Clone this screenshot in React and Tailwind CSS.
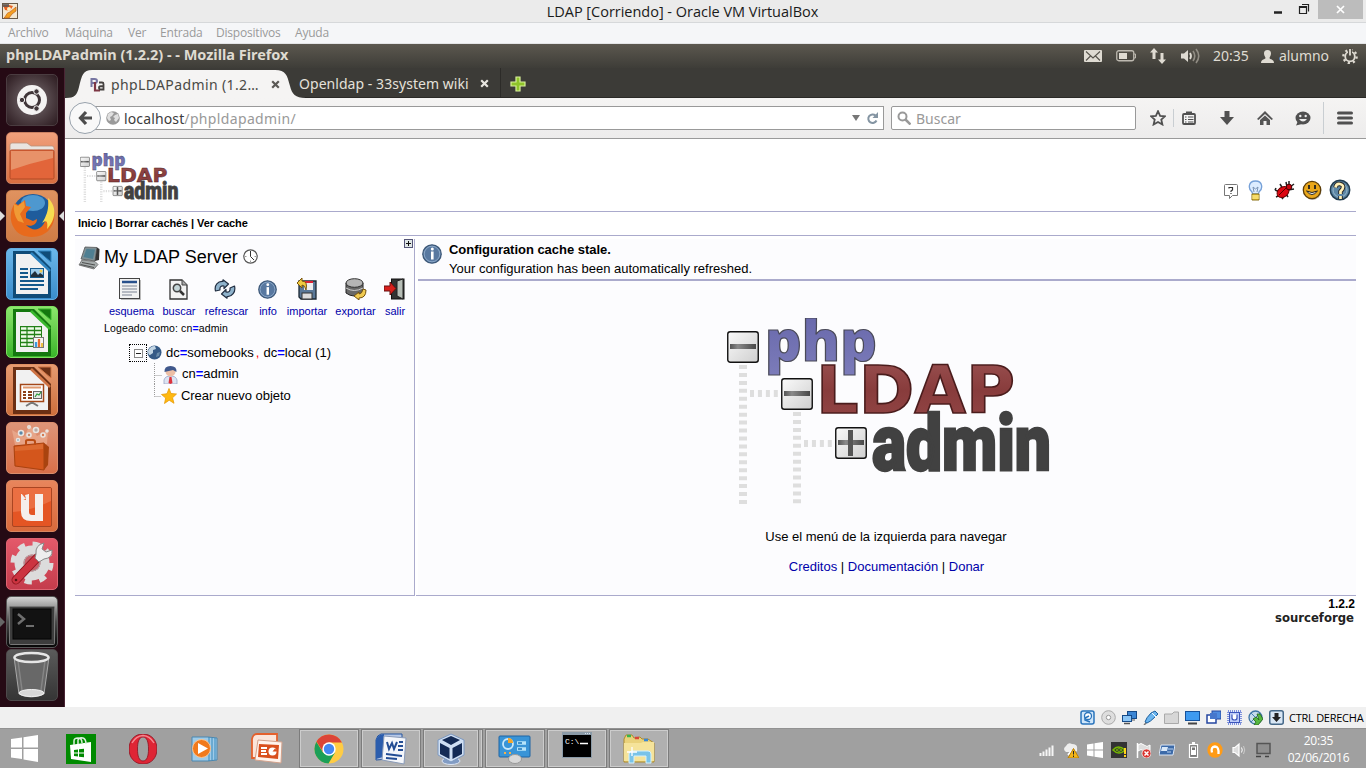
import React from "react";

const UBUNTU = "font-['Noto_Sans','Open_Sans',sans-serif]";
const SEGOE = "font-['Open_Sans','Noto_Sans',sans-serif]";
const ARIAL = "font-['Liberation_Sans',Arial,sans-serif]";

function Svg({ w = 16, h = 16, vb, className = "", children }) {
  return (
    <svg width={w} height={h} viewBox={vb || `0 0 ${w} ${h}`} className={"block shrink-0 " + className} fill="none">
      {children}
    </svg>
  );
}

/* ---------- brand logo ---------- */

function TreeBox({ x, y, plus }) {
  return (
    <g>
      <rect x={x + 0.75} y={y + 0.75} width="30.5" height="30.5" rx="2.5" fill="url(#boxg)" stroke="#111" strokeWidth="1.4" />
      <rect x={x + 3} y={y + 13} width="26" height="5" fill="url(#barg)" />
      {plus && <rect x={x + 13} y={y + 3} width="5" height="26" fill="#555" />}
    </g>
  );
}

function Logo({ w, h, vb, className }) {
  return (
    <Svg w={w} h={h} vb={vb} className={className}>
      <defs>
        <linearGradient id="boxg" x1="0" y1="0" x2="1" y2="1">
          <stop offset="0" stopColor="#fafafa" />
          <stop offset="1" stopColor="#cfcfcf" />
        </linearGradient>
        <linearGradient id="barg">
          <stop offset="0" stopColor="#555" />
          <stop offset=".3" stopColor="#8a8a8a" />
          <stop offset="1" stopColor="#484848" />
        </linearGradient>
        <linearGradient id="phpg" x1="0" y1="0" x2="0" y2="1">
          <stop offset="0" stopColor="#6464a8" />
          <stop offset="1" stopColor="#7c7cba" />
        </linearGradient>
        <linearGradient id="ldapg" x1="0" y1="0" x2="0" y2="1">
          <stop offset="0" stopColor="#9c5353" />
          <stop offset=".5" stopColor="#883c3c" />
          <stop offset="1" stopColor="#934646" />
        </linearGradient>
      </defs>
      <g stroke="#dedede" strokeDasharray="4 3.94">
        <path d="M16 47V188" strokeWidth="8" />
        <path d="M70 94V188" strokeWidth="8" />
        <path d="M23 75.500H53" strokeWidth="7" />
        <path d="M77 125.500H107" strokeWidth="7" />
      </g>
      <TreeBox x={0} y={13} />
      <TreeBox x={54} y={60} />
      <TreeBox x={108} y={109} plus />
      <text x="38" y="43" fontFamily="Open Sans" fontWeight="800" fontSize="56" textLength="112" lengthAdjust="spacingAndGlyphs" fill="url(#phpg)" stroke="#4a4a58" strokeWidth="1.2">php</text>
      <text x="89" y="95" fontFamily="DejaVu Sans" fontWeight="bold" fontSize="65" textLength="199" lengthAdjust="spacingAndGlyphs" fill="url(#ldapg)" stroke="#4a1c1c" strokeWidth="1.6">LDAP</text>
      <text x="145" y="152" fontFamily="Roboto" fontWeight="900" fontSize="78" textLength="179" lengthAdjust="spacingAndGlyphs" fill="#414141" stroke="#414141" strokeWidth="2.500">admin</text>
    </Svg>
  );
}

/* ---------- host window ---------- */

function TitleBar() {
  return (
    <div className={"flex h-[23px] shrink-0 border-b border-[#d6d8da] bg-[#ebebeb] " + SEGOE}>
      <div className="w-[90px] pl-0.5 pt-[3px]">
        <Svg>
          <rect x=".5" y=".5" width="15" height="15" fill="#f3e7d0" stroke="#6a5a48" />
          <path d="M2 15C5 12 4 10 8 9L14 4V8L10 11 7 15Z" fill="#f4a020" stroke="#c0601a" strokeWidth=".7" />
          <path d="M1 2H7L11 3 8 8 3 7Z" fill="#e86020" />
          <path d="M1 1H7V4H1Z" fill="#555" opacity=".8" />
          <circle cx="7" cy="6" r="2" fill="#fff0c0" />
        </Svg>
      </div>
      <div className="flex-1 pl-[9px] text-center text-[14.500px] leading-[23px] tracking-[-0.020px] text-[#1a1a1a]">LDAP [Corriendo] - Oracle VM VirtualBox</div>
      <div className="flex w-[100px] items-start">
        <Svg w={52} h={19}>
          <path d="M8 12.500H16" stroke="#222" strokeWidth="2.5" />
          <path d="M33.500 6.500H40.500V13.500H33.500ZM36 4.500H42.500V11.500" stroke="#222" strokeWidth="1.200" />
          <path d="M33 7H41" stroke="#222" strokeWidth="2" />
        </Svg>
        <div className="flex h-[19px] w-[45px] items-center justify-center bg-[#bcbcbc]">
          <Svg w={9} h={9}><path d="M1 1L8 8M8 1L1 8" stroke="#fff" strokeWidth="1.700" /></Svg>
        </div>
      </div>
    </div>
  );
}

function MenuBar() {
  return (
    <div className={"flex h-[21px] shrink-0 border-b border-[#e3e4e6] bg-[#f5f6f8] pl-2 text-[12px] leading-[20px] tracking-[-0.200px] text-[#9a9a9a] " + SEGOE}>
      <span className="w-[57px]">Archivo</span>
      <span className="w-[63px]">Máquina</span>
      <span className="w-8">Ver</span>
      <span className="w-14">Entrada</span>
      <span className="w-[79px]">Dispositivos</span>
      <span>Ayuda</span>
    </div>
  );
}

/* ---------- guest desktop ---------- */

function UnityPanel() {
  return (
    <div className={"flex h-6 shrink-0 items-center bg-linear-to-b from-[#5c584f] to-[#3e3d38] text-[#dfdbd2] " + UBUNTU}>
      <span className="-mt-[2px] pl-1.5 text-[14.500px] font-bold tracking-[-0.020px]">phpLDAPadmin (1.2.2) - - Mozilla Firefox</span>
      <div className="ml-auto flex items-center text-[14px]">
        <Svg w={18} h={12} className="mr-[14px]">
          <rect width="18" height="12" rx="1" fill="#dfdbd2" />
          <path d="M2 1.500L9 8 16 1.500M2 10.500L6.500 6M16 10.500L11.500 6" stroke="#55524a" strokeWidth="1.100" />
        </Svg>
        <Svg w={20} h={12} className="mr-[13px]">
          <rect x=".75" y=".75" width="17" height="10" rx="2" stroke="#bdb9b0" strokeWidth="1.300" />
          <path d="M18 4H19.500V8H18" stroke="#bdb9b0" />
          <rect x="3" y="3" width="8" height="6" fill="#dfdbd2" />
        </Svg>
        <Svg w={18} h={18} className="mr-[13px]">
          <path d="M5 1L9 5.500H6.500V12H3.500V5.500H1ZM13 17L9 12.500H11.500V6H14.500V12.500H17Z" fill="#dfdbd2" />
        </Svg>
        <Svg w={22} h={16} className="mr-[11px]">
          <path d="M1 5.500H4L8 2V14L4 10.500H1Z" fill="#dfdbd2" />
          <path d="M10 5Q12 8 10 11" stroke="#dfdbd2" strokeWidth="1.800" />
          <path d="M13 3Q16.500 8 13 13M16 1Q21.500 8 16 15" stroke="#918d84" strokeWidth="1.600" />
        </Svg>
        <span className="-mt-[2px] w-[48px]">20:35</span>
        <Svg w={13} h={13} className="mr-[5px]">
          <path d="M6.500 0C9 0 10 1.500 10 3.500 10 6 8.500 7 8.500 8 8.500 9.500 13 9 13 13H0C0 9 4.500 9.500 4.500 8 4.500 7 3 6 3 3.500 3 1.500 4 0 6.500 0Z" fill="#dfdbd2" />
        </Svg>
        <span className="-mt-[2px] w-[63px] tracking-[-0.050px]">alumno</span>
        <Svg w={16} h={16} className="mr-2">
          <circle cx="8" cy="8.500" r="6.600" stroke="#dfdbd2" strokeWidth="2.400" strokeDasharray="2.180 3" />
          <circle cx="8" cy="8.500" r="4.800" stroke="#dfdbd2" strokeWidth="1.800" />
          <rect x="6" y="0" width="4" height="6.500" fill="#504d45" />
          <path d="M8 1V7.500" stroke="#dfdbd2" strokeWidth="1.800" />
        </Svg>
      </div>
    </div>
  );
}

function DocIcon({ c1, c2, children }) {
  return (
    <Svg w={52} h={52}>
      <path d="M7 3H28L45 20V50H7Z" fill={c2} />
      <path d="M10 6H25L42 22V46H10Z" fill="#f1f1f1" />
      <path d="M25 5L44 23" stroke={c1} strokeWidth="2.500" />
      <path d="M32 3H45V14Z" fill={c2} stroke={c1} />
      {children}
    </Svg>
  );
}

const tiles = [
  {
    bg: "bg-radial from-[#7d7477] to-[#2c1b20] border-[#4a3c40]",
    icon: (
      <Svg w={52} h={52}>
        <circle cx="26" cy="26" r="15" fill="#f4f2f2" />
        <circle cx="26" cy="26" r="7.500" stroke="#403539" strokeWidth="3" />
        <g fill="#403539" stroke="#f4f2f2"><circle cx="16" cy="26" r="2.700" /><circle cx="30.500" cy="17.500" r="2.700" /><circle cx="30.500" cy="34.500" r="2.700" /></g>
      </Svg>
    ),
  },
  {
    bg: "bg-linear-to-b from-[#f0a07c] to-[#d96e40] border-[#c98062]",
    icon: (
      <Svg w={52} h={52}>
        <path d="M4 22V13Q4 11 6 11H21L25 14H46Q48 14 48 16V22Z" fill="#e9e4e0" stroke="#b98f7a" strokeWidth=".8" />
        <rect x="4" y="18" width="44" height="29" rx="1.500" fill="#e2653a" stroke="#b04a25" />
        <path d="M5 19H47V26Q25 31 5 38Z" fill="#eaa27a" opacity=".75" />
      </Svg>
    ),
  },
  {
    bg: "bg-linear-to-b from-[#e0925f] to-[#cf7c45] border-[#c98050]",
    icon: (
      <Svg w={52} h={52}>
        <circle cx="27" cy="25" r="21" fill="#1e5c9c" />
        <ellipse cx="27" cy="13" rx="12" ry="8" fill="#5aa8dc" opacity=".8" />
        <path d="M42 10C52 19 49 34 43 40 34 50 14 49 8 38 3 30 4 20 9 13L12 15 19 10 20 16 25 17 20 23 20 28 27 31 31 29C31 35 25 37 20 35 29 44 38 38 40 28 43 22 43 16 42 10Z" fill="#e86a1c" />
        <path d="M42 8C52 17 49 31 41 39 42 32 41 29 36 33 42 24 43 16 42 8Z" fill="#f8dc50" />
        <path d="M8 14L12 16 18 11 19 17 14 24 18 33 12 31Q7 24 8 14Z" fill="#f09a35" />
      </Svg>
    ),
  },
  {
    bg: "bg-linear-to-b from-[#6bb7ea] to-[#3a8dcc] border-[#63ace0]",
    icon: (
      <DocIcon c1="#2e84c0" c2="#104c78">
        <path d="M14 21H22M14 25H22M14 29H22M14 33H38M14 37H38M14 41H32" stroke="#14598c" strokeWidth="2" />
        <rect x="24.500" y="20.500" width="13" height="9" fill="#9dcbea" stroke="#14598c" />
        <path d="M25 29V27L29 23 32 27 34 25 37 27V29Z" fill="#222f3a" />
        <circle cx="35" cy="23" r="1.500" fill="#f6cc4c" />
      </DocIcon>
    ),
  },
  {
    bg: "bg-linear-to-b from-[#8ce66c] to-[#38b428] border-[#7de060]",
    icon: (
      <DocIcon c1="#3ab82e" c2="#14780f">
        <rect x="14" y="20" width="22" height="21" fill="#238018" />
        <path d="M15 22.500H35M15 26.500H35M15 30.500H35M15 34.500H35M15 38.500H35" stroke="#effbe9" strokeWidth="2.500" />
        <path d="M21 20V41M28.500 20V41" stroke="#238018" strokeWidth="1.200" />
        <rect x="27.500" y="31.500" width="10" height="10" fill="#f5f5f5" stroke="#777" />
        <path d="M30 41V36" stroke="#3c9ade" strokeWidth="2.300" /><path d="M33 41V33" stroke="#e86a2c" strokeWidth="2.300" /><path d="M36 41V37" stroke="#edc043" strokeWidth="2" />
      </DocIcon>
    ),
  },
  {
    bg: "bg-linear-to-b from-[#e79a70] to-[#cd6f3c] border-[#df9164]",
    icon: (
      <DocIcon c1="#cf7445" c2="#6b2f14">
        <rect x="14.500" y="20.500" width="23" height="17" fill="#fff" stroke="#a34718" strokeWidth="1.500" />
        <path d="M17 23.500H35" stroke="#e0996f" strokeWidth="2" />
        <path d="M17 28H20M17 31H20M17 34H20M22 28H26M22 31H26M22 34H26" stroke="#8b3f18" strokeWidth="2" />
        <rect x="27.500" y="27.500" width="8" height="7" fill="#e8e8e8" stroke="#666" />
        <path d="M29 33L31 30 33 31 35 28" stroke="#2b9c3c" strokeWidth="1.200" />
        <path d="M20 42L25 39H27L32 42" stroke="#777" strokeWidth="2" />
      </DocIcon>
    ),
  },
  {
    bg: "bg-linear-to-b from-[#dd9478] to-[#d96f49] border-[#da8d6c]",
    icon: (
      <Svg w={52} h={52}>
        <path d="M9 23L6 8 18 15 24 3 31 14 42 8 41 22Z" fill="#f4c4a8" opacity=".45" />
        <g stroke="#e9e4e0" strokeWidth="1.600"><circle cx="15" cy="11" r="2.500" fill="#5c88a8" /><circle cx="30" cy="8" r="2.500" fill="#b8aba6" /><circle cx="37" cy="13" r="2" fill="#d67b52" /><circle cx="23" cy="13" r="2" fill="#c98d74" /><circle cx="12" cy="18" r="1.500" fill="#5c88a8" /><circle cx="23" cy="5" r="1.200" /><circle cx="41" cy="9" r="1" /></g>
        <path d="M8 24L38 21V48L9 44Z" fill="#d4561c" stroke="#a9420f" /><path d="M38 21L43 25 42 43 38 48Z" fill="#a9430f" />
        <path d="M9 25L37 22 37 27 9 29Z" fill="#dc6a30" />
        <path d="M20 23V19Q20 18 22 18H27Q29 18 29 20V23" stroke="#bb4d14" strokeWidth="2" />
      </Svg>
    ),
  },
  {
    bg: "bg-linear-to-b from-[#e8855c] to-[#d96a3c] border-[#d88660]",
    icon: (
      <Svg w={52} h={52}>
        <rect x="6.500" y="7.500" width="39" height="39" rx="1.500" fill="#e45524" stroke="#a94522" />
        <path d="M7 8H45V21Q24 31 7 32Z" fill="#f08056" opacity=".6" />
        <path d="M15 14H23V32Q23 35 26 35H29V14H37V41H25Q15 41 15 32V20H20V19Q17 19 17 22L15 21Z" fill="#f5efec" />
        <path d="M15 13L20 19 23 13Z" fill="#ea693b" /><path d="M19 15L23 14V20L20 19Z" fill="#f5efec" />
      </Svg>
    ),
  },
  {
    bg: "bg-linear-to-b from-[#e4596a] to-[#c43c4c] border-[#dd6472]",
    icon: (
      <Svg w={52} h={52}>
        <circle cx="26" cy="25" r="18.500" stroke="#dcdcdc" strokeWidth="6" strokeDasharray="7 7.530" />
        <circle cx="26" cy="25" r="13" stroke="#dcdcdc" strokeWidth="9" />
        <circle cx="26" cy="25" r="8" fill="#c9606a" stroke="#aaa" />
        <path d="M10 42L31 20" stroke="#8f1820" strokeWidth="9" strokeLinecap="round" />
        <path d="M10 42L31 20" stroke="#cc3440" strokeWidth="7" strokeLinecap="round" />
        <path d="M30 16Q29 7 38 5L36 11 40 14 46 12Q47 20 38 21L33 24 29 20Z" fill="#eeeeee" stroke="#888" />
        <circle cx="10" cy="42" r="1.300" fill="#5b1014" />
      </Svg>
    ),
  },
  {
    bg: "bg-linear-to-b from-[#d4d4d4] via-[#4b4b4b] to-[#070707] border-[#555]",
    icon: (
      <Svg w={52} h={52}>
        <rect x="3.500" y="10.500" width="45" height="38" rx="1" fill="#3d3d3d" stroke="#777" />
        <rect x="7" y="13" width="38" height="30" fill="#121212" stroke="#050505" />
        <path d="M12 18L18 23 12 28" stroke="#6f6f6f" strokeWidth="2.500" />
        <path d="M20 30H28" stroke="#6f6f6f" strokeWidth="2" />
      </Svg>
    ),
  },
  {
    bg: "bg-linear-to-b from-[#5b5b5b] to-[#353535] border-[#4d4a4b] -mt-[5px]",
    icon: (
      <Svg w={52} h={52}>
        <path d="M8 8L13 45Q25 51 38 45L43 8Z" fill="#686868" stroke="#a8a8a8" />
        <path d="M12 12L16 41M39 12L35 41" stroke="#858585" strokeWidth="1.500" />
        <ellipse cx="25.500" cy="8.500" rx="17" ry="4.500" fill="#555" stroke="#e6e6e6" strokeWidth="2.500" />
        <ellipse cx="25.500" cy="44" rx="12.500" ry="3.500" fill="#d8d8d8" stroke="#f2f2f2" />
      </Svg>
    ),
  },
];

function Launcher() {
  return (
    <div className="relative flex w-[65px] shrink-0 flex-col gap-1.5 border-r border-[#4a2535] bg-[#250a14] pl-1.5 pt-1.5">
      {tiles.map((t, i) => (
        <div key={i} className={"flex size-[52px] shrink-0 items-center justify-center overflow-hidden rounded-[5px] border " + t.bg}>
          {t.icon}
        </div>
      ))}
      <Svg w={5} h={10} className="absolute left-0 top-[143px]"><path d="M0 0L5 5 0 10Z" fill="#ddd" /></Svg>
      <Svg w={5} h={10} className="absolute left-[59px] top-[143px]"><path d="M5 0L0 5 5 10Z" fill="#ddd" /></Svg>
      <Svg w={5} h={10} className="absolute left-0 top-[549px]"><path d="M0 0L5 5 0 10Z" fill="#666" /></Svg>
    </div>
  );
}

function Close({ c }) {
  return <Svg w={9} h={9}><path d="M1.200 1.200L7.800 7.800M7.800 1.200L1.200 7.800" stroke={c} strokeWidth="2.200" /></Svg>;
}

function TabStrip() {
  return (
    <div className={"flex h-[30px] shrink-0 border-b border-[#2b2a27] bg-[#3c3b37] text-[14px] " + UBUNTU}>
      <div className="relative h-[30px] w-[234px]">
        <Svg w={242} h={30} className="absolute left-0 top-0">
          <path d="M0 30C10 30 12 27 14 19C17 7 18 2 27 2H210C221 2 222 7 225 18C227 26 230 30 241 30Z" fill="#f5f4f3" />
        </Svg>
        <div className="relative flex h-full items-center pl-[25px] pt-0.5">
          <Svg w={15} h={15}>
            <path d="M1.500 10V2H4.500Q7 2 7 4 7 6 4.500 6H2" stroke="#7776a2" strokeWidth="2" />
            <path d="M5 5V13.500H10" stroke="#7e3744" strokeWidth="2.200" />
            <path d="M9 5.500H12Q13.500 5.500 13.500 7V12.500H10.500Q9 12.500 9 10.500 9 9 13 9" stroke="#45413f" strokeWidth="1.800" />
          </Svg>
          <span className="ml-1.5 w-[160px] tracking-[0.380px] text-[#4a4945]">phpLDAPadmin (1.2…</span>
          <Close c="#5b5955" />
        </div>
      </div>
      <div className="flex w-[202px] items-center border-r border-[#2c2b28] pt-0.5">
        <span className="w-[181px] tracking-[0.050px] text-[#e4e1da]">Openldap - 33system wiki</span>
        <Close c="#e8e6e0" />
      </div>
      <div className="flex items-center pl-[9px] pt-0.5">
        <Svg w={16} h={16}><path d="M6 1H10V6H15V10H10V15H6V10H1V6H6Z" fill="#8fc42a" stroke="#d9f09c" strokeWidth="1.200" /></Svg>
      </div>
    </div>
  );
}

function NavBar() {
  return (
    <div className={"flex h-[41px] shrink-0 items-center border-b border-[#9a9a9a] bg-linear-to-b from-[#f5f4f3] to-[#edecec] pl-1 text-[14px] " + UBUNTU}>
      <div className="z-10 flex size-8 shrink-0 items-center justify-center rounded-full border border-[#98a2ac] bg-[#f8f8f8]">
        <Svg w={16} h={16}><path d="M9 2L3.500 8 9 14M4 8H15" stroke="#4c4c4c" strokeWidth="3.200" /></Svg>
      </div>
      <div className="-ml-1.5 flex h-6 w-[789px] items-center border border-[#999] bg-white pl-[10px]">
        <Svg w={14} h={14}>
          <circle cx="7" cy="7" r="6.800" fill="#9a9a9a" />
          <path d="M2 3L5 1 8 2 6 5 4 6 5 9 3 10 1 7ZM9 4L12 3 13 7 10 11 8 9 9 7 7 6Z" fill="#e0e0e0" />
        </Svg>
        <span className="ml-1 text-[#3c3c3c]"><span className="tracking-[0.130px]">localhost</span><span className="tracking-[0.350px] text-[#999]">/phpldapadmin/</span></span>
        <Svg w={8} h={6} className="ml-auto"><path d="M0 0H8L4 6Z" fill="#777" /></Svg>
        <Svg w={13} h={13} className="ml-1.5 mr-1">
          <path d="M9.500 3.500A4.300 4.300 0 1 0 10.500 8.500" stroke="#8595a3" strokeWidth="2" /><path d="M12 0V6H6.500Z" fill="#8595a3" />
        </Svg>
      </div>
      <div className="ml-[7px] flex h-6 w-[245px] items-center rounded-xs border border-[#999] bg-white pl-[5px]">
        <Svg w={14} h={14}><circle cx="5.500" cy="5.500" r="4" stroke="#999" strokeWidth="2" /><path d="M8.500 8.500L13.500 13.500" stroke="#999" strokeWidth="2.500" /></Svg>
        <span className="ml-[5px] text-[#999]">Buscar</span>
      </div>
      <Svg w={16} h={16} className="ml-3.5"><path d="M8 1.200L10.100 5.800 15 6.300 11.300 9.600 12.400 14.500 8 12 3.600 14.500 4.700 9.600 1 6.300 5.900 5.800Z" stroke="#505050" strokeWidth="1.800" /></Svg>
      <div className="ml-[7px] h-[18px] w-px bg-[#c9ced2]" />
      <Svg w={14} h={14} className="ml-2">
        <rect x="1" y="3" width="12" height="10" rx="1" fill="#f4f4f4" stroke="#505050" strokeWidth="1.800" /><path d="M4 2H10" stroke="#505050" strokeWidth="3" />
        <path d="M3 6H4.500M3 8.500H4.500M3 11H4.500M6 6H11.500M6 8.500H11.500M6 11H11.500" stroke="#505050" strokeWidth="1.100" />
      </Svg>
      <Svg w={14} h={14} className="ml-6"><path d="M4.500 0H9.500V6H14L7 14 0 6H4.500Z" fill="#505050" /></Svg>
      <Svg w={16} h={14} className="ml-[23px]"><path d="M0 8L8 0 16 8 14.500 9 8 3 1.500 9Z" fill="#555" /><path d="M3 9L8 4.500 13 9V14H9.500V10H6.500V14H3Z" fill="#555" /></Svg>
      <Svg w={16} h={15} className="ml-[22px]"><ellipse cx="8" cy="7" rx="7.500" ry="6.500" fill="#505050" /><path d="M3 10L1 14.500 7 13Z" fill="#505050" /><path d="M4 8Q8 13 12 8Z" fill="#eee" /><circle cx="5.300" cy="5" r="1.200" fill="#eee" /><circle cx="10.700" cy="5" r="1.200" fill="#eee" /></Svg>
      <div className="ml-3 h-8 w-px bg-[#c9ced2]" />
      <Svg w={16} h={14} className="ml-[13px]"><path d="M1.500 2H14.500M1.500 7H14.500M1.500 12H14.500" stroke="#505050" strokeWidth="3" strokeLinecap="round" /></Svg>
    </div>
  );
}

/* ---------- web page ---------- */

function InfoIcon({ s }) {
  return (
    <Svg w={s} h={s} vb="0 0 20 20">
      <circle cx="10" cy="10" r="9.200" fill="#5878a0" stroke="#3d5878" strokeWidth="1.300" />
      <circle cx="10" cy="10" r="7.800" stroke="#8ba8c8" strokeWidth="1" />
      <path d="M10.300 7.500V15.500" stroke="#fff" strokeWidth="2.600" /><circle cx="10.300" cy="4.900" r="1.500" fill="#fff" />
    </Svg>
  );
}

const tools = [
  ["esquema", "w-[45px]",
    <Svg w={22} h={22} className="mr-[3px]"><rect x="2" y="2" width="20" height="20" fill="#bbb" /><rect x=".5" y=".5" width="20" height="20" fill="#f2f2f2" stroke="#444" /><path d="M3 4H18" stroke="#28508c" strokeWidth="2.500" /><path d="M3 8H18M3 11H18M3 14H18M3 17H13" stroke="#a2a8b2" strokeWidth="1.500" /></Svg>],
  ["buscar", "w-[34px]",
    <Svg w={20} h={21}><path d="M1 1H13L18 6V20H1Z" fill="#f2f2f2" stroke="#333" strokeWidth="1.300" /><path d="M13 1V6H18" fill="#aaa" stroke="#444" /><circle cx="8" cy="9" r="3.700" fill="#c4d5d8" stroke="#444" strokeWidth="1.500" /><path d="M11 12L15 16" stroke="#333" strokeWidth="2.500" /></Svg>],
  ["refrescar", "w-[45px]",
    <Svg w={22} h={20} className="mr-[3px]">
      <g fill="#8fb3cc" stroke="#222f42" strokeWidth="1.200" strokeLinejoin="round">
        <path d="M1.500 12C0 6 4 2 9 2.500V.8L14.500 5 10 9.500V7C7 6.500 5.500 8 6 11Z" />
        <path d="M20.500 7C22 13 18 18 13 17.500V19.200L7.500 15 12 10.500V13C15 13.500 16.500 12 16 9Z" />
      </g>
    </Svg>],
  ["info", "w-[22px]", <div className="pr-[2px]"><InfoIcon s={19} /></div>],
  ["importar", "w-10",
    <Svg w={22} h={22}><path d="M3 3H20V21H5L3 19Z" fill="#5a7898" stroke="#1c2833" strokeWidth="1.300" /><rect x="8" y="3" width="9" height="9" fill="#eee" /><path d="M8 4H17" stroke="#d23" strokeWidth="2" /><rect x="6" y="15" width="10" height="6" fill="#ddd" stroke="#333" /><path d="M1 5L6 0V3Q12 3 10 12 9 7 6 7V10Z" fill="#f0ca40" stroke="#79550c" /></Svg>],
  ["exportar", "w-[41px]",
    <Svg w={22} h={22}><path d="M1 5V15Q9 21 18 15V5Z" fill="#686868" stroke="#222" /><ellipse cx="9.500" cy="5" rx="8.500" ry="4.300" fill="#b5b5b5" stroke="#333" /><path d="M1 10Q9 15 18 10" stroke="#ccc" /><path d="M21 12Q21 20 14 20V22L9 18 14 14V16Q17 16 18 11Z" fill="#f0ca50" stroke="#745310" /></Svg>],
  ["salir", "w-[22px]",
    <Svg w={22} h={22}><rect x="7.500" y="1" width="12.500" height="20" fill="#333" stroke="#111" /><path d="M13 3L19 1V21L13 18Z" fill="#b7beb7" stroke="#222" /><path d="M0 8H6V4L12 10.500 6 17V13H0Z" fill="#d8201c" stroke="#641010" /></Svg>],
];

function ServerPanel() {
  return (
    <div className="flex h-[356px] w-[340px] shrink-0 flex-col border-r border-[#aaaacc] bg-[#fcfcfe]">
      <div className="flex h-9 pl-[3px]">
        <Svg w={23} h={24} className="mt-[7px]">
          <path d="M7 1L19 1.500 17 15 3 13Z" fill="#7f9096" stroke="#555" strokeWidth=".8" /><path d="M8.500 3L17 3.500 15 13 5.500 11Z" fill="#4f7f92" />
          <path d="M19 1.500L21.500 3 21 14 17 15Z" fill="#333" /><path d="M4 14L17 15.500 20 18.500 16 23 1 19Z" fill="#a5abab" stroke="#666" strokeWidth=".8" /><path d="M4 16.500L17 19M2.500 18.500L16 21.500" stroke="#444" strokeWidth=".9" />
        </Svg>
        <span className="ml-[3px] mt-[6px] text-[18px] leading-6">My LDAP Server</span>
        <Svg w={15} h={15} className="ml-[5px] mt-[10px]"><circle cx="7.500" cy="7.500" r="6.700" fill="#fff" stroke="#555" strokeWidth="1.200" /><path d="M7.500 2V7.500L11 11" stroke="#333" /><path d="M2 7.500H3.500M11.500 7.500H13M7.500 11.500V13" stroke="#999" /></Svg>
        <Svg w={9} h={9} className="ml-auto mr-px"><rect x=".5" y=".5" width="8" height="8" fill="#dfe6e6" stroke="#557" /><path d="M2 4.500H7M4.500 2V7" stroke="#111" /></Svg>
      </div>
      <div className="flex gap-2 pl-[34px] text-[11px] text-[#0000aa]">
        {tools.map(([label, w, icon]) => (
          <div key={label} className={"flex flex-col items-center " + w}>
            <div className="flex h-7 items-center">{icon}</div>
            <span className="leading-[17px]">{label}</span>
          </div>
        ))}
      </div>
      <div className="pl-[29px] text-[10.500px] leading-[16px] tracking-[0.130px]">Logeado como: cn<b className="text-[#0000ff]">=</b>admin</div>
      <div className="mt-[5px] flex h-6 pl-[54px] text-[13px]">
        <div className="mt-[3px] flex size-[18px] items-center justify-center border border-dotted border-black">
          <Svg w={9} h={9}><rect x=".5" y=".5" width="8" height="8" fill="#fff" stroke="#888" /><path d="M2 4.500H7" stroke="#222" /></Svg>
        </div>
        <Svg w={15} h={15} className="mt-1">
          <circle cx="7.500" cy="7.500" r="7" fill="#355a86" /><path d="M1 6Q3 1 8 1L9 4 6 5 6 8 3 10Q1 10 1 6Z" fill="#c2d5e4" /><path d="M10 8L13 7 12 11 9 12Z" fill="#6a8cab" />
        </Svg>
        <span className="ml-1 leading-[24px]">dc<b className="text-[#0000ff]">=</b>somebooks<span className="inline-block w-[6px] pl-[2px] text-[#f00]">,</span> dc<b className="text-[#0000ff]">=</b>local (1)</span>
      </div>
      <div className="-mt-[2px] flex h-[21px] pl-[79px] text-[13px]">
        <Svg w={8} h={21}><path d="M.5 0V21M.5 12.500H8" stroke="#999" strokeDasharray="1 1" /></Svg>
        <Svg w={17} h={19} className="mt-[2px]">
          <path d="M2 19V15Q3 11 8.500 11 14 11 15 15V19Z" fill="#dde4f2" stroke="#9aa4c8" strokeWidth=".8" /><path d="M7.500 12H9.500L10.500 18 8.500 19 6.500 18Z" fill="#dc333d" /><circle cx="8.500" cy="6.500" r="5" fill="#edbfa6" /><path d="M2.500 7Q2 1 8.500 1 15 1 14.500 7L11 5Z" fill="#40588c" />
        </Svg>
        <span className="ml-[3px] leading-[22px]">cn<b className="text-[#0000ff]">=</b>admin</span>
      </div>
      <div className="flex h-[22px] pl-[79px] text-[13px]">
        <Svg w={7} h={22}><path d="M.5 0V12.500M.5 12.500H8" stroke="#999" strokeDasharray="1 1" /></Svg>
        <Svg w={16} h={16} className="mt-1"><path d="M8 .5L10 5.500 15.500 6 11.500 9.800 13 15.300 8.200 12.200 3.500 15.500 4.700 10 .5 6.500 6 5.700Z" fill="#ffb910" stroke="#e79a08" strokeWidth=".8" /></Svg>
        <span className="ml-1 leading-[24px] tracking-[-0.050px]">Crear nuevo objeto</span>
      </div>
    </div>
  );
}

function PageHeader() {
  return (
    <div className="flex h-[73px] shrink-0 items-end justify-between border-b border-[#aaaacc] pl-[5px]">
      <Logo w={99} h={49} vb="0 0 326 161" className="mb-[9px]" />
      <div className="mb-[10px] flex items-center gap-[7px] pr-[5px]">
        <Svg w={16} h={18} className="mr-[2px]"><path d="M1.500 4.500Q1.500 3.500 2.500 3.500H13.500Q14.500 3.500 14.500 4.500V14.500H9.500L6.500 17.500V14.500H1.500Z" fill="#fff" stroke="#777" /><path d="M6 7.500V6.500H9.500V9L8 10V11M8 12V13" stroke="#333" strokeWidth="1.200" /></Svg>
        <Svg w={15} h={21} className="mr-[3px]"><path d="M7.500 1C0 1 0 9 4 12L4.500 14H10.500L11 12C15 9 15 1 7.500 1Z" fill="#dcecff" stroke="#75a0d8" strokeWidth="1.300" /><path d="M5 7L6 12M10 7L9 12M5 7L7.500 9 10 7" stroke="#7a93b5" /><path d="M4 14H11V20H4Z" fill="#ecc635" stroke="#8a7114" /><path d="M4 16H11M4 18H11" stroke="#fff2a2" /></Svg>
        <Svg w={22} h={20}><path d="M2 10L7 12M3 17L9 14M9 19L12 15M7 4L10 9M13 2L14 7M16 1L16 5M21 4L17 7M21 9L15 10M13 14L15 17M3 8L2 10" stroke="#222" strokeWidth="1.500" /><ellipse cx="10" cy="12" rx="6.500" ry="5" transform="rotate(-38 10 12)" fill="#dd0712" stroke="#600" /><circle cx="16" cy="7" r="2.800" fill="#c80610" stroke="#400" /><path d="M6 15L14 7" stroke="#500" /></Svg>
        <Svg w={20} h={20}><circle cx="10.500" cy="11" r="9" fill="#bbb" /><circle cx="10" cy="10" r="8.700" fill="#e9a71b" stroke="#5c3d08" strokeWidth="1.300" /><path d="M7 5V9M13 5V9" stroke="#222" strokeWidth="1.800" /><path d="M4.500 11Q10 18 15.500 11Q10 14 4.500 11Z" fill="#fff" stroke="#222" /></Svg>
        <Svg w={22} h={22}><circle cx="11" cy="11" r="9.700" fill="#5c86a5" stroke="#223d50" strokeWidth="1.500" /><circle cx="11" cy="11" r="7" stroke="#97b7c8" /><path d="M6.500 8.500Q7 4.500 11 5 15.500 6 13.500 10L11.500 12.500V15M11.500 17V20" stroke="#222" strokeWidth="4.500" /><path d="M6.500 8.500Q7 4.500 11 5 15.500 6 13.500 10L11.500 12.500V15M11.500 17V20" stroke="#fff1b8" strokeWidth="2.700" /></Svg>
      </div>
    </div>
  );
}

function Page() {
  return (
    <div className={"flex flex-1 flex-col bg-white pl-2.5 pr-2.5 text-black " + ARIAL}>
      <PageHeader />
      <div className="h-6 shrink-0 border-b border-[#aaaacc] pl-[3px] text-[11px] font-bold leading-[23px] tracking-[-0.080px]">Inicio | Borrar cachés | Ver cache</div>
      <div className="flex pt-[3px]">
        <div className="border-b border-[#aaaacc]"><ServerPanel /></div>
        <div className="ml-px flex h-[357px] flex-1 flex-col border-b border-[#aaaacc] pl-0.5">
          <div className="flex h-[42px] shrink-0 border-b-2 border-[#aaaacc] bg-[#fcfcfe] pl-1 pt-[1px]">
            <div className="pt-1"><InfoIcon s={20} /></div>
            <div className="ml-[7px] text-[13px] leading-[19px]">
              <b className="tracking-[-0.030px]">Configuration cache stale.</b>
              <div>Your configuration has been automatically refreshed.</div>
            </div>
          </div>
          <div className="flex flex-1 flex-col items-center bg-[#fcfcfe] pt-[37px] text-[13px]">
            <Logo w={326} h={190} vb="0 0 326 190" className="ml-[6px]" />
            <span className="mr-[2px] mt-[19px] leading-5">Use el menú de la izquierda para navegar</span>
            <span className="mr-[1px] mt-[10px] leading-5"><span className="text-[#0000aa]">Creditos</span> | <span className="text-[#0000aa]">Documentación</span> | <span className="text-[#0000aa]">Donar</span></span>
          </div>
        </div>
      </div>
      <div className="flex flex-col items-end pr-px text-[12px] font-bold leading-[15px]">
        <span className="pt-px">1.2.2</span>
        <Svg w={80} h={15}><text x="0" y="10" fontFamily="DejaVu Sans" fontWeight="bold" fontSize="12.500" textLength="79" lengthAdjust="spacingAndGlyphs" fill="#222">sourceforge</text></Svg>
      </div>
    </div>
  );
}

/* ---------- host bars ---------- */

const vmIcons = [
  <><rect x="1" y="1" width="13" height="13" rx="2" fill="#cfe6fa" stroke="#2a74bc" strokeWidth="1.500" /><circle cx="8" cy="6" r="3.500" fill="#fff" stroke="#2a74bc" strokeWidth="1.300" /><path d="M9 6L5 8V10L10 12" stroke="#2a74bc" strokeWidth="1.500" /></>,
  <><circle cx="7.500" cy="7.500" r="6.800" fill="#dedede" stroke="#aaa" /><circle cx="7.500" cy="7.500" r="2.200" fill="#fff" stroke="#999" /></>,
  <><rect x="5.500" y="1.500" width="9" height="7" fill="#3c86d4" stroke="#164a88" /><path d="M8 10H13" stroke="#555" /><rect x=".5" y="5.500" width="9" height="6" fill="#8cc6f6" stroke="#164a88" /><path d="M2 13.500H8" stroke="#555" strokeWidth="1.500" /></>,
  <><path d="M1 15L4 12" stroke="#777" strokeWidth="1.500" /><path d="M2 12Q3 8 8 3L12 1 15 4 12 7Q7 12 4 13Z" fill="#6bb5ef" stroke="#20609c" /><path d="M9 3L13 7" stroke="#fff" /></>,
  <><path d="M.5 4H8L10 2H14.500V13.500H.5Z" fill="#d7d7d7" stroke="#aaa" /></>,
  <><rect x=".5" y="1.500" width="14" height="9" fill="#3e9af0" stroke="#15519b" /><path d="M3 13.500H12" stroke="#444" strokeWidth="2" /></>,
  <><rect x="6" y="1" width="9" height="8" fill="#4f8ce0" stroke="#2546a0" /><rect x="1" y="5" width="9" height="8" fill="#fff" stroke="#2546a0" strokeWidth="1.500" /><rect x="4" y="3" width="7" height="6" fill="#4777cc" /></>,
  <><rect x="1" y="1" width="13" height="13" fill="#e5edff" stroke="#7f92dc" strokeWidth="2" strokeDasharray="1 1" /><rect x="2.500" y="2.500" width="10" height="10" fill="#bdccf8" stroke="#3d55bb" /><path d="M5 4.500V8Q5 10 7.500 10 10 10 10 8V4.500" fill="#fff" stroke="#3d55bb" strokeWidth="1.200" /></>,
  <><circle cx="7.500" cy="7.500" r="6.500" fill="#c6dcec" stroke="#3d74a4" strokeWidth="1.300" /><path d="M3 3L12 12M3 12L12 3" stroke="#4580b4" /><path d="M5 9L8 7 11 10 9 4H12L15 9 10 15H6L8 12Z" fill="#56b740" stroke="#236316" strokeWidth=".8" /></>,
  <><rect x=".75" y=".75" width="13.500" height="13.500" rx="2" fill="#d8e6f4" stroke="#456888" strokeWidth="1.500" /><path d="M5.500 3H9.500V7H12L7.500 12 3 7H5.500Z" fill="#222" /></>,
];

function VmStatus() {
  return (
    <div className={"flex h-[21px] shrink-0 items-center justify-end bg-[#f0f0f0] pr-0.5 text-black " + SEGOE}>
      <div className="mr-[5px] flex gap-1.5">{vmIcons.map((g, i) => <Svg key={i} w={15} h={15}>{g}</Svg>)}</div>
      <span className="w-[75px] whitespace-nowrap pt-px text-[11px] tracking-[-0.250px]">CTRL DERECHA</span>
    </div>
  );
}

const pinned = [
  <Svg w={30} h={30}><rect width="30" height="30" fill="#008a00" /><path d="M4 11L25 8V28L5 25Z" fill="#fff" /><path d="M8 11V7Q8 4 12 4 16 4 16 9M12 10V6Q13 3 17 4 20 5 20 10" stroke="#dff0df" strokeWidth="1.500" /><path d="M8 16L12 15.500V18.500H8ZM13 15.300L18 14.700V18.500H13ZM8 19.500H12V22.500L8 22ZM13 19.500H18V23.300L13 22.700Z" fill="#008a00" /></Svg>,
  <Svg w={28} h={30}><path fillRule="evenodd" d="M14 0C5 0 0 7 0 15S5 30 14 30 28 23 28 15 23 0 14 0ZM14 3C18 3 19.500 8 19.500 15S18 27 14 27 8.500 22 8.500 15 10 3 14 3Z" fill="#df2535" stroke="#8d1020" strokeWidth=".8" /><path d="M3 9Q7 2 14 1.500 21 2 25 9" stroke="#f58790" strokeWidth="1.500" /></Svg>,
  <Svg w={29} h={26}><path d="M1 1H17L26 2V24L17 25H1Z" fill="#9fcbe8" stroke="#4a87b0" /><path d="M18 1V25M21 2V24M24 2V24" stroke="#3689bb" /><circle cx="10.500" cy="12.500" r="9" fill="#f17a1c" stroke="#fbc38f" /><path d="M7 7L17 12.500 7 18Z" fill="#fff" /></Svg>,
  <Svg w={32} h={32}><path d="M6 1H26V25L1 25V6Q2 1 6 1Z" fill="#fbe5da" stroke="#e4602c" strokeWidth="1.800" /><path d="M7 7L31 9 30 30 4 27Z" fill="#fff3ec" stroke="#d3a28c" /><path d="M8 11L28 12 27 26 7 24Z" fill="#d9501e" /><path d="M10 15H16M10 18H15M10 21H16" stroke="#fff" strokeWidth="1.800" /><circle cx="21.500" cy="18.500" r="4" fill="#fff" /><path d="M21.500 18.500L24 15.500 27 18.500Z" fill="#d9501e" /></Svg>,
];

const running = [
  <Svg w={30} h={30}><circle cx="15" cy="15" r="14.500" fill="#fc4" /><path d="M2.400 7.700A14.500 14.500 0 0 0 14.500 29.500L21 18.500 9 18.500Z" fill="#1b9f58" /><path d="M15 8.500H28A14.500 14.500 0 0 0 2.500 7.500L9 18Z" fill="#dc4437" /><circle cx="15" cy="15" r="6.700" fill="#fff" /><circle cx="15" cy="15" r="5.200" fill="#4587f3" /></Svg>,
  <Svg w={32} h={32}><path d="M6 1H27V25L1 27V7Q2 2 6 1Z" fill="#b7c8e6" stroke="#2454a0" /><path d="M1 7Q3 1 9 1L8 24 1 26Z" fill="#2b5dad" /><path d="M9 3L31 5 29 31 7 27Z" fill="#f5f7fb" stroke="#899ab8" /><path d="M12 9L14 16 17 10 19 16 22 9" stroke="#234d94" strokeWidth="2" /><path d="M24 9H28M23 13H28M23 17H28M11 21L27 23M11 25L22 26" stroke="#234d94" strokeWidth="2" /></Svg>,
  <Svg w={28} h={32}><ellipse cx="14" cy="28" rx="9" ry="3.500" fill="#829cc4" stroke="#dbe4f2" /><path d="M14 1L27 7V22L14 29 1 22V7Z" fill="#cfdff3" stroke="#7c98c0" /><path d="M14 3L23 7 14 12 5 7ZM3 10L12.500 15V26L3 21ZM25 10L15.500 15V26L25 21Z" fill="#142b55" /></Svg>,
  <Svg w={34} h={30}><rect x="1" y="2" width="31" height="21" rx="1" fill="#3994d7" stroke="#1e65a4" /><circle cx="10" cy="10" r="5" stroke="#c9e8fb" strokeWidth="1.800" /><path d="M10 9V4Q15 4 15 9Z" fill="#f4a62b" /><path d="M19 9H28M19 15H28" stroke="#b5e3fa" strokeWidth="3.500" /><path d="M20 9H24M20 15H24" stroke="#1d75b8" strokeWidth="1.500" /><path d="M6 19H8M11 19H13" stroke="#f6b04a" strokeWidth="2" /><ellipse cx="17" cy="25" rx="6.500" ry="4.500" fill="#d8d8d8" stroke="#999" /></Svg>,
  <Svg w={30} h={26} className="-mt-2"><rect width="30" height="26" fill="#8b9ba8" /><rect x="1" y="3" width="28" height="22" fill="#000" /><path d="M23 1.500H28" stroke="#d6e2ef" strokeDasharray="1 1" /><text x="3" y="12" fontFamily="Liberation Mono" fontSize="8" fill="#fff">C:\</text><path d="M18 11.500H26" stroke="#fff" strokeWidth="1.500" /></Svg>,
  <Svg w={34} h={30}><path d="M2 5L4 1H10L12 4 18 3 20 5 26 5 32 9V28H2Z" fill="#ead27b" stroke="#ad8b2d" /><path d="M5 2H9" stroke="#38b44c" strokeWidth="2.500" /><path d="M13 4H17" stroke="#d94838" strokeWidth="2.500" /><path d="M22 6H26" stroke="#3687d8" strokeWidth="2.500" /><path d="M2 9H19L21 8H32V27H2Z" fill="#f5e39a" /><path d="M7 29V20Q7 17 10 17H26Q29 17 29 20V29H24V22H12V29Z" fill="#79c3e8" stroke="#d4f1fc" /><path d="M10 13V22M5 18H15" stroke="#fff" strokeWidth="1.300" /></Svg>,
];

const tray = [
  <path d="M1.500 14V11M4.500 14V9.500M7.500 14V7.500M10.500 14V5.500M13.500 14V3.500" stroke="#f5f5f5" strokeWidth="2" />,
  <><path d="M3 10Q-1 7 3 4 5 0 9 2 15 2 14 7 15 11 9 10Z" fill="#eee" /><path d="M5 13L9 9" stroke="#fff" strokeWidth="2" /><path d="M10.500 6.500L16 16H5Z" fill="#f5b719" stroke="#b77e05" /><path d="M10.500 9V12.500M10.500 13.500V15" stroke="#222" /></>,
  <path d="M0 2.500L6.500 1.500V7.500H0ZM7.500 1.300L16 0V7.500H7.500ZM0 8.500H6.500V14.500L0 13.500ZM7.500 8.500H16V16L7.500 14.700Z" fill="#fff" />,
  <><rect x="0" y="0" width="16" height="16" fill="#333" /><path d="M2 8Q7 2 14 8 8 14 2 8Z" stroke="#76b900" strokeWidth="1.500" /><path d="M5 8Q8 5 11 8 8 11 5 8" stroke="#76b900" /><path d="M14 6V12M14 13V15" stroke="#ffd21a" strokeWidth="2" /></>,
  <><path d="M2.500 1V16" stroke="#fff" strokeWidth="1.500" /><path d="M3 3Q6 0 9 3T15 3V9Q12 12 9 9T3 9Z" fill="#ddd" stroke="#fff" /><circle cx="11.500" cy="11.500" r="4.500" fill="#d93430" stroke="#fff" strokeWidth=".7" /><path d="M9.500 9.500L13.500 13.500M13.500 9.500L9.500 13.500" stroke="#fff" strokeWidth="1.500" /></>,
  <><path d="M2 3H16L14 13H0Z" fill="#3c6aa8" stroke="#dbe6f5" /><path d="M3 5H9L8 9H2Z" fill="#d9e8f8" /><path d="M9 7H14M8 10H12" stroke="#b9d2ef" /></>,
  <><rect x="6.500" y="2.500" width="8" height="13" fill="#777" stroke="#fff" strokeWidth="1.200" /><path d="M9 1H12" stroke="#fff" strokeWidth="2" /><rect x="8.500" y="5" width="4" height="3.500" stroke="#fff" /><rect x="8" y="9" width="5" height="4" fill="#fff" /></>,
  <><circle cx="8" cy="8" r="7.700" fill="#ff9b16" /><path d="M5 10.500Q3.500 5 8 4.500 12 4.500 11.500 12" stroke="#fff" strokeWidth="2.300" /></>,
  <><path d="M2 5.500H4L8 2V14L4 10.500H2Z" fill="#ddd" stroke="#fff" strokeWidth="1.200" /><path d="M10.500 5.500Q12 8 10.500 10.500" stroke="#fff" /><path d="M12.500 4Q15 8 12.500 12" stroke="#ccc" /></>,
  <><path d="M2 1.500H15V11.500H2Z" fill="#8f8f8f" stroke="#555" strokeWidth="1.500" /><path d="M1 14.500H6M10 14.500H14" stroke="#444" strokeWidth="1.500" /></>,
];

function Taskbar() {
  return (
    <div className={"flex h-10 shrink-0 border-t border-[#929292] bg-[#a0a0a0] " + SEGOE}>
      <div className="flex w-[50px] items-center pl-[11px]">
        <Svg w={27} h={27}><path d="M0 4L11 2.500V12.500H0ZM12.500 2.300L27 0V12.500H12.500ZM0 14H11V24L0 22.500ZM12.500 14H27V27L12.500 24.500Z" fill="#fff" /></Svg>
      </div>
      {pinned.map((p, i) => <div key={i} className="flex w-[62px] items-center justify-center">{p}</div>)}
      <div className="ml-px flex gap-0.5">
        {running.map((p, i) => (
          <div key={i} className="flex h-[39px] w-[60px] border border-[#7c7c7c] bg-[#b0b0b0]">
            <div className="flex flex-1 items-center justify-center border border-[#cccccc]">{p}</div>
            {i === 2 && <div className="w-1 border-l border-r border-l-[#7c7c7c] border-r-[#cccccc]" />}
          </div>
        ))}
      </div>
      <div className="ml-auto flex items-center gap-2 pt-[2px]">{tray.map((g, i) => <Svg key={i}>{g}</Svg>)}</div>
      <div className="w-[95px] pt-[3px] text-center text-[12px] leading-[17px] tracking-[-0.200px] text-white">20:35<br />02/06/2016</div>
    </div>
  );
}

export default function App() {
  return (
    <div className="flex h-[768px] w-[1366px] flex-col overflow-hidden whitespace-nowrap">
      <TitleBar />
      <MenuBar />
      <UnityPanel />
      <div className="flex h-[639px] shrink-0">
        <Launcher />
        <div className="flex w-[1301px] flex-col">
          <TabStrip />
          <NavBar />
          <Page />
        </div>
      </div>
      <VmStatus />
      <Taskbar />
    </div>
  );
}
